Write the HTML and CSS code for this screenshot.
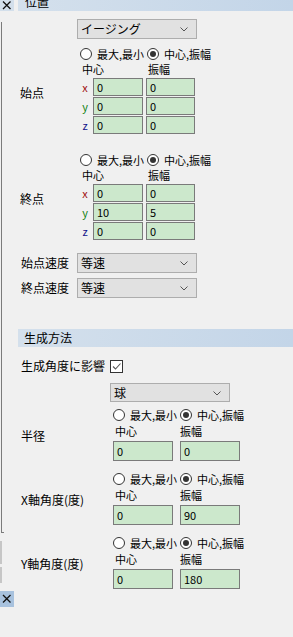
FILE: index.html
```html
<!DOCTYPE html>
<html lang="ja">
<head>
<meta charset="utf-8">
<link rel="stylesheet" href="styles.css">
</head>
<body>
<div class="app">
  <aside class="rail">
    <div class="xbtn xtop"><svg width="14" height="11" viewBox="0 0 14 11"><path d="M3 1.5 L10.5 9 M10.5 1.5 L3 9" stroke="#111" stroke-width="1.3" fill="none"/></svg></div>
    <div class="frame"></div>
    <div class="seg seg1"></div>
    <div class="seg seg2"></div>
    <div class="xbtn xbot"><svg width="14" height="16" viewBox="0 0 14 16"><path d="M3 4 L10.5 11.5 M10.5 4 L3 11.5" stroke="#111" stroke-width="1.3" fill="none"/></svg></div>
  </aside>
  <main class="main">
    <div class="hdr hdr-cut"><span>位置</span></div>

    <div class="sel-row">
      <div class="select">イージング<svg class="chev" width="8" height="5" viewBox="0 0 8 5"><path d="M0.5 0.5 L4 4 L7.5 0.5" stroke="#555" fill="none"/></svg></div>
    </div>

    <div class="pt">
      <div class="plabel">始点</div>
      <div class="pblock">
        <div class="radios">
          <span class="ropt"><span class="radio"></span>最大,最小</span>
          <span class="ropt"><span class="radio on"></span>中心,振幅</span>
        </div>
        <div class="xyz">
          <span class="cap c1">中心</span><span class="cap c2">振幅</span>
          <span class="ax ax-x">x</span><span class="in">0</span><span class="in">0</span>
          <span class="ax ax-y">y</span><span class="in">0</span><span class="in">0</span>
          <span class="ax ax-z">z</span><span class="in">0</span><span class="in">0</span>
        </div>
      </div>
    </div>

    <div class="pt pt2">
      <div class="plabel">終点</div>
      <div class="pblock">
        <div class="radios">
          <span class="ropt"><span class="radio"></span>最大,最小</span>
          <span class="ropt"><span class="radio on"></span>中心,振幅</span>
        </div>
        <div class="xyz">
          <span class="cap c1">中心</span><span class="cap c2">振幅</span>
          <span class="ax ax-x">x</span><span class="in">0</span><span class="in">0</span>
          <span class="ax ax-y">y</span><span class="in">10</span><span class="in">5</span>
          <span class="ax ax-z">z</span><span class="in">0</span><span class="in">0</span>
        </div>
      </div>
    </div>

    <div class="speeds">
      <div class="srow">
        <span class="slabel">始点速度</span>
        <div class="select">等速<svg class="chev" width="8" height="5" viewBox="0 0 8 5"><path d="M0.5 0.5 L4 4 L7.5 0.5" stroke="#555" fill="none"/></svg></div>
      </div>
      <div class="srow">
        <span class="slabel">終点速度</span>
        <div class="select">等速<svg class="chev" width="8" height="5" viewBox="0 0 8 5"><path d="M0.5 0.5 L4 4 L7.5 0.5" stroke="#555" fill="none"/></svg></div>
      </div>
    </div>

    <div class="hdr hdr2"><span>生成方法</span></div>

    <div class="chk-row">
      <span class="slabel">生成角度に影響</span>
      <span class="check"><svg width="11" height="11" viewBox="0 0 11 11"><path d="M2 5.5 L4.5 8 L9.5 2.5" stroke="#555" stroke-width="1.1" fill="none"/></svg></span>
    </div>

    <div class="sel-row2">
      <div class="select sel-sm">球<svg class="chev" width="8" height="5" viewBox="0 0 8 5"><path d="M0.5 0.5 L4 4 L7.5 0.5" stroke="#555" fill="none"/></svg></div>
    </div>

    <div class="blk">
      <div class="blabel">半径</div>
      <div class="bbody">
        <div class="radios">
          <span class="ropt"><span class="radio"></span>最大,最小</span>
          <span class="ropt"><span class="radio on"></span>中心,振幅</span>
        </div>
        <div class="pair">
          <span class="cap2 k1">中心</span><span class="cap2">振幅</span>
          <span class="in in2">0</span><span class="in in2">0</span>
        </div>
      </div>
    </div>

    <div class="blk">
      <div class="blabel">X軸角度(度)</div>
      <div class="bbody">
        <div class="radios">
          <span class="ropt"><span class="radio"></span>最大,最小</span>
          <span class="ropt"><span class="radio on"></span>中心,振幅</span>
        </div>
        <div class="pair">
          <span class="cap2 k1">中心</span><span class="cap2">振幅</span>
          <span class="in in2">0</span><span class="in in2">90</span>
        </div>
      </div>
    </div>

    <div class="blk">
      <div class="blabel">Y軸角度(度)</div>
      <div class="bbody">
        <div class="radios">
          <span class="ropt"><span class="radio"></span>最大,最小</span>
          <span class="ropt"><span class="radio on"></span>中心,振幅</span>
        </div>
        <div class="pair">
          <span class="cap2 k1">中心</span><span class="cap2">振幅</span>
          <span class="in in2">0</span><span class="in in2">180</span>
        </div>
      </div>
    </div>
  </main>
</div>
</body>
</html>
```

FILE: styles.css
```css
html, body {
  margin: 0;
  padding: 0;
}
body {
  background: #f0f0f0;
  font-family: "Noto Sans CJK JP", "Noto Sans", sans-serif;
  font-size: 12px;
  color: #000;
  width: 293px;
  height: 637px;
  overflow: hidden;
}
.app {
  display: grid;
  grid-template-columns: 18px 1fr;
  height: 637px;
}

/* left rail */
.rail {
  display: flex;
  flex-direction: column;
  align-items: flex-start;
}
.xbtn {
  width: 14px;
  display: flex;
}
.xtop {
  height: 11px;
  background: #d3dfeb;
}
.xbot {
  height: 16px;
  margin-top: 8px;
  background: #a8c2de;
}
.frame {
  margin-top: 11px;
  margin-left: 1px;
  width: 2px;
  height: 510px;
  border-left: 1px solid #7b7b7b;
  border-bottom: 1px solid #7b7b7b;
}
.seg {
  width: 2px;
  background: #c6c6c6;
}
.seg1 {
  margin-top: 8px;
  height: 23px;
}
.seg2 {
  margin-top: 3px;
  height: 16px;
}

/* headers */
.hdr {
  height: 18px;
  line-height: 18px;
  padding-left: 6px;
  background: linear-gradient(to right, #d4e0ec, #c3d5e8);
  font-size: 12px;
  overflow: hidden;
}
.hdr-cut {
  height: 11px;
  line-height: 4px;
  padding-left: 7px;
}
.hdr2 {
  margin-top: 31px;
}

/* selects */
.select {
  position: relative;
  box-sizing: border-box;
  width: 120px;
  height: 20px;
  border: 1px solid #adadad;
  background: #e1e1e1;
  padding-left: 3px;
  line-height: 18px;
  font-size: 12px;
}
.chev {
  position: absolute;
  right: 8px;
  top: 7px;
}
.sel-row {
  margin-top: 8px;
  padding-left: 59px;
}
.sel-row2 {
  margin-top: 11px;
  padding-left: 92px;
}
.sel-sm {
  height: 19px;
  line-height: 17px;
}

/* point blocks */
.pt {
  margin-top: 7px;
  display: grid;
  grid-template-columns: 62px auto;
}
.pt2 {
  margin-top: 18px;
}
.plabel {
  padding-left: 2px;
  align-self: center;
  padding-top: 6px;
  font-size: 12px;
  line-height: 16px;
}
.radios {
  height: 16px;
  display: flex;
  align-items: center;
  font-size: 11px;
  line-height: 16px;
}
.ropt {
  display: flex;
  align-items: center;
  gap: 5px;
}
.ropt:first-child {
  width: 67px;
}
.radio {
  box-sizing: border-box;
  width: 12px;
  height: 12px;
  border: 1px solid #333;
  border-radius: 50%;
  background: #fff;
  display: flex;
  align-items: center;
  justify-content: center;
}
.radio.on::after {
  content: "";
  width: 6px;
  height: 6px;
  border-radius: 50%;
  background: #333;
}
.xyz {
  display: grid;
  grid-template-columns: 10px 50px 49px;
  column-gap: 3px;
  row-gap: 1px;
}
.cap {
  height: 15px;
  line-height: 15px;
  font-size: 11px;
  padding-left: 2px;
}
.c1 {
  grid-column: 1 / 3;
}
.ax {
  text-align: center;
  font-size: 11px;
  line-height: 18px;
}
.ax-x { color: #a01010; }
.ax-y { color: #108010; }
.ax-z { color: #10108a; }
.in {
  box-sizing: border-box;
  height: 18px;
  border: 1px solid #7a7a7a;
  background: #cce8cc;
  padding-left: 3px;
  font-size: 11px;
  line-height: 16px;
}

/* speeds */
.speeds {
  margin-top: 13px;
  display: flex;
  flex-direction: column;
  gap: 5px;
}
.srow {
  display: grid;
  grid-template-columns: 59px auto;
  align-items: center;
}
.slabel {
  padding-left: 3px;
  font-size: 12px;
  line-height: 16px;
}

/* section 2 */
.chk-row {
  margin-top: 11px;
  height: 14px;
  display: grid;
  grid-template-columns: 92px auto;
  align-items: center;
}
.check {
  box-sizing: border-box;
  width: 13px;
  height: 13px;
  border: 1px solid #333;
  background: #fff;
  display: flex;
}
.blk {
  margin-top: 5px;
  display: grid;
  grid-template-columns: 95px auto;
}
.blk + .blk {
  margin-top: 10px;
}
.blabel {
  padding-left: 3px;
  align-self: center;
  padding-top: 3px;
  font-size: 12px;
  line-height: 16px;
}
.pair {
  display: grid;
  grid-template-columns: 60px 60px;
  column-gap: 7px;
}
.cap2 {
  height: 16px;
  line-height: 16px;
  font-size: 11px;
  margin-bottom: 2px;
}
.k1 {
  padding-left: 2px;
}
.in2 {
  height: 20px;
  line-height: 18px;
}
```
